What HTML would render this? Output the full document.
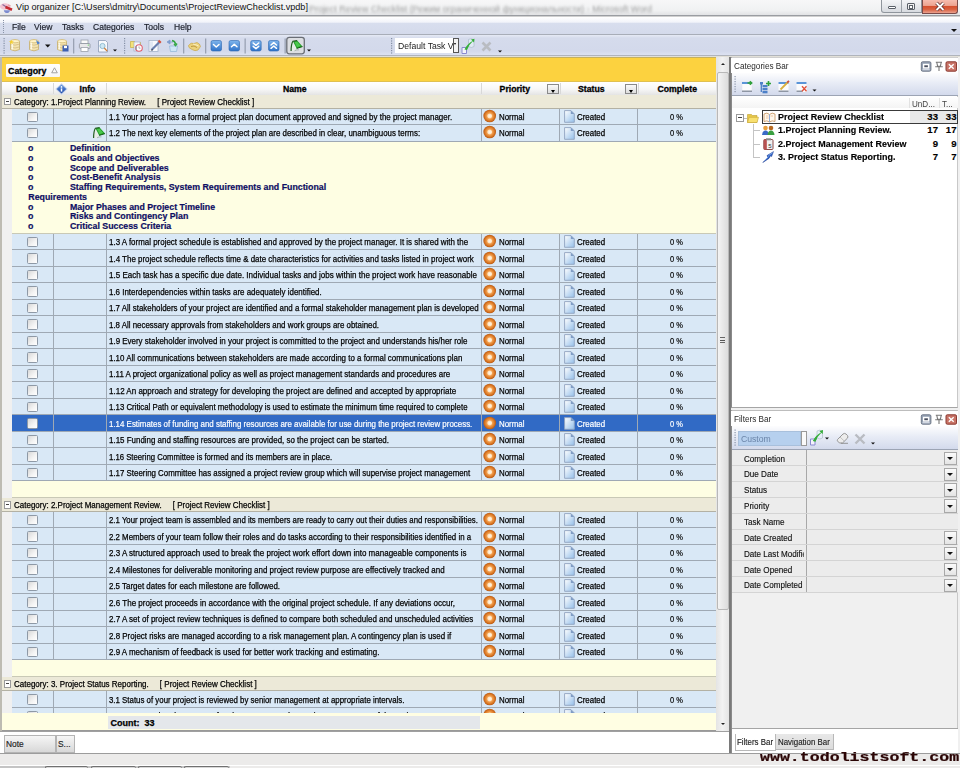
<!DOCTYPE html>
<html><head><meta charset="utf-8">
<style>
*{box-sizing:border-box;margin:0;padding:0}
html,body{width:960px;height:768px;overflow:hidden;background:#f0f0f0;font-family:"Liberation Sans",sans-serif;color:#000;position:relative}
.a{position:absolute}
svg{position:absolute;display:block}
#title{left:0;top:0;width:960px;height:16px;background:linear-gradient(#f7f7f8,#f0f1f2 70%,#e2e3e5);border-bottom:1px solid #9a9da2}
#title .tt{position:absolute;left:16px;top:2.2px;font-size:9.1px;color:#111;white-space:nowrap}
#title .blur{position:absolute;left:309px;top:2.5px;font-size:9.6px;color:#8c8c8c;white-space:nowrap;filter:blur(1.4px);opacity:.85;transform:scaleX(.93);transform-origin:0 0}
#menu{left:0;top:16px;width:960px;height:19px;background:linear-gradient(#ffffff,#f2f4fa 30%,#d8deee 38%,#d4daeb);border-top:1px solid #d0d0d0;border-bottom:1px solid #a8adb8}
#menu span{position:absolute;top:5px;font-size:9.3px;color:#1b1f2a;white-space:nowrap;transform:scaleX(.92);transform-origin:0 0;-webkit-text-stroke:.2px #1b1f2a}
#tb{left:0;top:35px;width:960px;height:22px;background:linear-gradient(#e6eaf5,#d5dbec 15%,#d3d9eb 80%,#dde2f1);border-bottom:2px solid #e2e0d8}
.grip{position:absolute;width:2px;border-left:1px dotted #8a94a8}
.sep{position:absolute;width:1px;background:#a8b0c0;border-right:1px solid #fff}
#grid{left:0;top:0;width:729px;height:731px;overflow:hidden}
#gl{left:0;top:57px;width:1.5px;height:674px;background:#bdbbb2}
#group{left:1.5px;top:57px;width:714.5px;height:25px;background:#fcd23f;border-top:1px solid #c4b060;border-bottom:1px solid #e0c050}
#catbtn{left:6px;top:64px;width:54px;height:12.5px;background:linear-gradient(#ffffff,#f6f6f6);border-radius:1px}
#catbtn span{position:absolute;left:2px;top:1.5px;font-size:8.9px;font-weight:bold;color:#000;-webkit-text-stroke:.3px #000}
#hdr{left:2px;top:82px;width:714px;height:13px;background:linear-gradient(#ffffff,#f7f7f7 55%,#e4e4e4)}
.hs{position:absolute;top:1px;width:1px;height:11px;background:#d8d8d8}
.hb{position:absolute;top:2px;font-size:8.7px;font-weight:bold;white-space:nowrap;color:#000;-webkit-text-stroke:.3px #000}
.dd{position:absolute;top:84px;width:12px;height:10px;border:1px solid #8a8a8a;background:linear-gradient(#fafafa,#dedede)}
.dd:after{content:"";position:absolute;left:3px;top:4.5px;border-left:2.5px solid transparent;border-right:2.5px solid transparent;border-top:3px solid #000}
#rows{left:0;top:57px;width:716px;height:656px;overflow:hidden}
.row{position:absolute;left:12px;width:704px;height:16.5px;background:#d9e8f6;border-bottom:1px solid #9fa9b4}
.row .c{position:absolute;top:0;height:100%;border-right:1px solid #9fa9b4;overflow:hidden;white-space:nowrap}
.row.sel{background:#316ac5;color:#fff}
.cb{position:absolute;left:15.4px;top:3.2px;width:10.5px;height:10.3px;border:1px solid #8e99a6;border-radius:1.5px;background:linear-gradient(135deg,#d8d8d8,#f4f4f4 60%,#ffffff)}
.nm span{position:absolute;left:2.4px;top:3.3px;font-size:9px;display:inline-block;transform:scaleX(.885);transform-origin:0 0;color:#000;-webkit-text-stroke:.25px #000}
.sel .nm span,.sel .c span,.sel .cp b{color:#fff;-webkit-text-stroke:.2px #fff}
.ip{left:1.3px;top:.3px}
.id{left:3.5px;top:1.5px}
.gr{left:38px;top:1px}
.t1,.t2{position:absolute;top:3.3px;font-size:9px;transform:scaleX(.88);transform-origin:0 0;color:#000;-webkit-text-stroke:.25px #000}
.t1{left:17px}.t2{left:17px}
.cp b{position:absolute;left:32.5px;top:3.3px;font-weight:normal;font-size:9px;color:#000;-webkit-text-stroke:.2px #000;transform:scaleX(.83);transform-origin:0 0}
.cat{position:absolute;left:2px;width:714px;background:#ece9d8;border-bottom:1px solid #b3b1a4}
.xb{position:absolute;left:1.5px;top:2.8px;width:7.5px;height:7.5px;border:1px solid #9a9a9a;background:#fff}
.xb:after{content:"";position:absolute;left:1px;top:2.2px;width:3.5px;height:1px;background:#444}
.ct,.cl{position:absolute;top:2.2px;font-size:9px;white-space:nowrap;transform:scaleX(.889);transform-origin:0 0;color:#000;-webkit-text-stroke:.25px #000}
.ct{left:12.2px}
.cl{left:153.8px}
.note{position:absolute;left:12px;width:704px;background:#fefee3;border-bottom:1px solid #c9c9b6}
.nb,.nt{position:absolute;font-size:8.8px;font-weight:bold;color:#0e0e62;white-space:nowrap;-webkit-text-stroke:.2px #0e0e62}
.nb{left:16px}
#foot{left:2px;top:713px;width:714px;height:18px;background:#fffee3;border-bottom:1px solid #999}
#count{left:108px;top:715.5px;width:372px;height:13.5px;background:#e4e7eb}
#count span{position:absolute;left:2.5px;top:2px;font-size:9px;font-weight:bold;color:#000;-webkit-text-stroke:.25px #000}
#sb{left:716px;top:57px;width:13px;height:674px;background:linear-gradient(90deg,#e4e4e4,#f2f2f2 50%,#e4e4e4)}
#thumb{left:717px;top:72px;width:11.5px;height:538px;border:1px solid #b8b8b8;border-radius:2px;background:linear-gradient(90deg,#f4f4f4,#dcdcdc)}
#split{left:729px;top:57px;width:2px;height:696px;background:#7a7a7a}
#right{left:731px;top:57px;width:229px;height:696px;background:#f0f0f0}
.ph{position:absolute;left:0;width:226px;height:15.5px;background:#fff}
.ph span{position:absolute;left:3px;top:3.5px;font-size:8.8px;color:#222;white-space:nowrap}
.ptb{position:absolute;left:0;width:226px;background:linear-gradient(#fafbfd,#d9dff0)}
#bottom{left:0;top:731px;width:729px;height:22px;background:#fff;border-top:1px solid #a0a0a0}
.ntab{position:absolute;top:2.5px;height:18px;border:1px solid #b4b4b4;background:linear-gradient(#f6f6f6,#d8d8d8);font-size:8.4px;color:#222;-webkit-text-stroke:.15px #222}
.ntab span{position:absolute;left:1px;top:3.5px;white-space:nowrap}
#status{left:0;top:753px;width:960px;height:15px;background:#ecebea;border-top:1px solid #9c9c9c}
#wm{left:760px;top:750.5px;font-family:"Liberation Mono",monospace;font-weight:bold;font-size:16.6px;line-height:16px;color:#2a0404;white-space:nowrap;letter-spacing:0;transform:scaleY(.8);transform-origin:0 0;-webkit-text-stroke:.3px #2a0404}

</style></head><body>
<div id="title" class="a">
 <svg style="left:0;top:0" width="14" height="15" viewBox="0 0 14 15"><ellipse cx="5" cy="6.5" rx="5" ry="3.2" fill="#f2c4d2"/><path d="M2.5 4.5 L6 6.8" stroke="#8a6a9a" stroke-width="1.2"/><path d="M5.5 7 L12 9.8" stroke="#c42a32" stroke-width="2.6"/><path d="M8 5 L10.5 6" stroke="#e8a0a8" stroke-width="1.5"/><path d="M3.8 10.2 H10 Q9.5 13 7 13 Q4.3 13 3.8 10.2Z" fill="#7d8cd0"/></svg>
 <span class="tt">Vip organizer [C:\Users\dmitry\Documents\ProjectReviewChecklist.vpdb]</span>
 <div class="blur">Project Review Checklist (Режим ограниченной функциональности) - Microsoft Word</div>
 <div class="a" style="left:881px;top:0;width:41px;height:13px;border:1px solid #8f959c;border-top:0;border-radius:0 0 0 3px;background:linear-gradient(#f4f5f7,#d8dbe0)"></div>
 <div class="a" style="left:901px;top:0;width:1px;height:12px;background:#9aa0a6"></div>
 <div class="a" style="left:888px;top:6px;width:8px;height:3px;border:1px solid #5a6068;border-radius:1px;background:#fff"></div>
 <div class="a" style="left:907px;top:2.5px;width:8px;height:7px;border:1px solid #5a6068;border-radius:1px;background:#f0f0f0"></div>
 <div class="a" style="left:909px;top:4.5px;width:4px;height:4px;border:1px solid #5a6068;background:#fff"></div>
 <div class="a" style="left:921.5px;top:0;width:36.5px;height:13.5px;border:1px solid #7a4a48;border-top:0;border-radius:0 0 3px 0;background:linear-gradient(#f6bcae,#eda491 42%,#d5502f 50%,#d9603f 72%,#eba18e)"></div>
 <svg style="left:933px;top:1px" width="14" height="11" viewBox="0 0 14 11"><path d="M3.5 2 L10.5 9 M10.5 2 L3.5 9" stroke="#5a2a28" stroke-width="3.4"/><path d="M3.5 2 L10.5 9 M10.5 2 L3.5 9" stroke="#fff" stroke-width="1.9"/></svg>
</div>
<div id="menu" class="a">
 <div class="grip" style="left:3px;top:3px;height:13px"></div>
 <span style="left:11.5px">File</span><span style="left:34px">View</span><span style="left:62px">Tasks</span><span style="left:92.5px">Categories</span><span style="left:143.5px">Tools</span><span style="left:174px">Help</span>
 <div class="a" style="left:950.5px;top:11.5px;border-left:3px solid transparent;border-right:3px solid transparent;border-top:3.5px solid #111"></div>
</div>
<div class="a" style="left:0;top:55px;width:960px;height:1px;background:#b0b4bc;z-index:2"></div>
<div id="tb" class="a">
<svg style="left:0;top:0" width="520" height="22" viewBox="0 0 520 22">
<g fill="#8590a6"><rect x="3.5" y="3.0" width="1.2" height="1.2"/><rect x="3.5" y="5.4" width="1.2" height="1.2"/><rect x="3.5" y="7.8" width="1.2" height="1.2"/><rect x="3.5" y="10.2" width="1.2" height="1.2"/><rect x="3.5" y="12.6" width="1.2" height="1.2"/><rect x="3.5" y="15.0" width="1.2" height="1.2"/><rect x="3.5" y="17.4" width="1.2" height="1.2"/></g>
<g transform="translate(10,4)">
<path d="M0.5 2.2 Q5 -0.6 9.5 2.2 V10.5 Q5 13.3 0.5 10.5Z" fill="#f3e3b0" stroke="#c4ac6a" stroke-width=".8"/>
<ellipse cx="5" cy="2.2" rx="4.5" ry="1.6" fill="#fff3c8" stroke="#c8ac62" stroke-width=".6"/>
<path d="M0.8 5.2 Q5 7.2 9.2 5.2 M0.8 8 Q5 10 9.2 8" fill="none" stroke="#cdb478" stroke-width=".7"/>
<path d="M2.3 3.5 V10.5" stroke="#fffdf2" stroke-width="1.6" opacity=".85"/>
<path d="M1 0.5 L2 2.2 L3.8 2.3 L2.5 3.5 L3 5.3 L1.4 4.3 L-.2 5.3 L.3 3.5 L-1 2.3 L.8 2.2Z" fill="#f6d030"/></g>
<g transform="translate(29,4)">
<path d="M0.5 2.2 Q5 -0.6 9.5 2.2 V10.5 Q5 13.3 0.5 10.5Z" fill="#f3e3b0" stroke="#c4ac6a" stroke-width=".8"/>
<ellipse cx="5" cy="2.2" rx="4.5" ry="1.6" fill="#fff3c8" stroke="#c8ac62" stroke-width=".6"/>
<path d="M0.8 5.2 Q5 7.2 9.2 5.2 M0.8 8 Q5 10 9.2 8" fill="none" stroke="#cdb478" stroke-width=".7"/>
<path d="M2.3 3.5 V10.5" stroke="#fffdf2" stroke-width="1.6" opacity=".85"/>
<path d="M7 1 L11 4 L8.5 5.5Z" fill="#4a7fd0"/></g>
<path d="M45 9.5 H50.5 L47.75 12.5Z" fill="#111"/>
<g transform="translate(57,4)">
<path d="M0.5 2.2 Q5 -0.6 9.5 2.2 V10.5 Q5 13.3 0.5 10.5Z" fill="#f3e3b0" stroke="#c4ac6a" stroke-width=".8"/>
<ellipse cx="5" cy="2.2" rx="4.5" ry="1.6" fill="#fff3c8" stroke="#c8ac62" stroke-width=".6"/>
<path d="M0.8 5.2 Q5 7.2 9.2 5.2 M0.8 8 Q5 10 9.2 8" fill="none" stroke="#cdb478" stroke-width=".7"/>
<path d="M2.3 3.5 V10.5" stroke="#fffdf2" stroke-width="1.6" opacity=".85"/>
<rect x="5.5" y="6.5" width="6" height="6" fill="#3d5fb0"/><rect x="7" y="7" width="3" height="2.2" fill="#fff"/></g>
<rect x="73" y="3.5" width="1.3" height="15" fill="#9aa2b3"/>
<g transform="translate(79,5)"><rect x="2" y="0" width="7" height="4" fill="#fafafa" stroke="#9aa0aa" stroke-width=".8"/><rect x="0.4" y="3.5" width="10.6" height="5" rx="1" fill="#e8e8ea" stroke="#8a909a" stroke-width=".8"/><rect x="2" y="7.5" width="7" height="4" fill="#fff" stroke="#9aa0aa" stroke-width=".8"/><circle cx="9.3" cy="5" r=".6" fill="#3c3"/></g>
<g transform="translate(98,5)"><path d="M.5 .5h7l2 2v9.5h-9z" fill="#f7f9fc" stroke="#8b9bb5" stroke-width=".8"/><circle cx="4.5" cy="6" r="2.6" fill="#cfe8f3" stroke="#7fb0c9" stroke-width=".8"/><path d="M6.3 8 L9.2 11.2" stroke="#d07a30" stroke-width="1.2"/></g>
<path d="M113 14.5 H117 L115 16.5Z" fill="#111"/>
<g fill="#8590a6"><rect x="124" y="3.0" width="1.2" height="1.2"/><rect x="124" y="5.4" width="1.2" height="1.2"/><rect x="124" y="7.8" width="1.2" height="1.2"/><rect x="124" y="10.2" width="1.2" height="1.2"/><rect x="124" y="12.6" width="1.2" height="1.2"/><rect x="124" y="15.0" width="1.2" height="1.2"/><rect x="124" y="17.4" width="1.2" height="1.2"/></g>
<g transform="translate(130,4)"><path d="M0.5 2.5h4l1 1h5v5h-10z" fill="#f3e27a" stroke="#c9b040" stroke-width=".7"/><rect x="4" y="3" width="6" height="9" fill="#f4f6fb" stroke="#9aa6bc" stroke-width=".6"/><circle cx="9" cy="9" r="3.3" fill="#fff" stroke="#e06070" stroke-width="1.1"/><path d="M9 7.3 V9.2 H10.5" stroke="#888" stroke-width=".6" fill="none"/><rect x="5.5" y="7" width="1.2" height="4" fill="#8a96aa"/></g>
<g transform="translate(148.5,4.5)"><rect x="0.5" y="1" width="9" height="11" fill="#f8f9fd" stroke="#a5b4ca" stroke-width=".8"/><rect x="1.5" y="2" width="3" height="9" fill="#e2e8f4"/><path d="M3 10.5 L11 2.5" stroke="#6a7fae" stroke-width="2.2"/><path d="M10 1 L12.3 3.3" stroke="#d8503a" stroke-width="2"/><path d="M2.5 11.3 L3.5 9.6 L4.6 10.6Z" fill="#333"/></g>
<g transform="translate(166,4)"><path d="M1 3 L4 1 L4 5Z M4 3 H7" fill="#7f9ccc" stroke="#7f9ccc" stroke-width=".8"/><path d="M3.5 7h8l-1 5.5h-6z" fill="#cfe6f6" stroke="#8fb4d6" stroke-width=".7"/><path d="M6 1.5 Q9 2 9.5 5 M8 5 L9.5 6.5 L11 4.5" stroke="#36a845" stroke-width="1.5" fill="none"/></g>
<rect x="183" y="3.5" width="1.3" height="15" fill="#9aa2b3"/>
<g transform="translate(188,6.5)"><path d="M0.5 4 Q3 0.5 6 2 L9 1 Q12 2 12.5 5 L10 8.5 Q7 10 4 8 L1 6Z" fill="#ecd27c" stroke="#c6a64a" stroke-width=".7"/><path d="M3 5 Q6 3.5 9 6" stroke="#b08a30" stroke-width=".8" fill="none"/><path d="M5 2.5 Q8 3 10.5 4.5" stroke="#fff6d0" stroke-width=".8" fill="none"/></g>
<rect x="205" y="3.5" width="1.3" height="15" fill="#9aa2b3"/>
<g transform="translate(210.5,5)"><rect x=".5" y=".5" width="10.5" height="10.5" rx="1.8" fill="url(#bl)" stroke="#2c67b0" stroke-width=".6"/><path d="M3 4.5 L5.75 7 L8.5 4.5" stroke="#fff" stroke-width="1.5" fill="none" stroke-linecap="round" stroke-linejoin="round"/></g><g transform="translate(228.5,5)"><rect x=".5" y=".5" width="10.5" height="10.5" rx="1.8" fill="url(#bl)" stroke="#2c67b0" stroke-width=".6"/><path d="M3 6.8 L5.75 4.3 L8.5 6.8" stroke="#fff" stroke-width="1.5" fill="none" stroke-linecap="round" stroke-linejoin="round"/></g><g transform="translate(250.2,5)"><rect x=".5" y=".5" width="10.5" height="10.5" rx="1.8" fill="url(#bl)" stroke="#2c67b0" stroke-width=".6"/><path d="M3 3 L5.75 5.3 L8.5 3 M3 6.3 L5.75 8.6 L8.5 6.3" stroke="#fff" stroke-width="1.5" fill="none" stroke-linecap="round" stroke-linejoin="round"/></g><g transform="translate(268,5)"><rect x=".5" y=".5" width="10.5" height="10.5" rx="1.8" fill="url(#bl)" stroke="#2c67b0" stroke-width=".6"/><path d="M3 5 L5.75 2.7 L8.5 5 M3 8.3 L5.75 6 L8.5 8.3" stroke="#fff" stroke-width="1.5" fill="none" stroke-linecap="round" stroke-linejoin="round"/></g>
<defs><linearGradient id="bl" x1="0" y1="0" x2="0" y2="1"><stop offset="0" stop-color="#7fb5ec"/><stop offset="1" stop-color="#2f73c9"/></linearGradient></defs>
<rect x="244.5" y="3.5" width="1.3" height="15" fill="#9aa2b3"/>
<rect x="284.5" y="3.5" width="1.3" height="15" fill="#9aa2b3"/>
<rect x="286.8" y="2.3" width="17.5" height="16.5" rx="2.5" fill="#dcdee2" stroke="#6a6e76" stroke-width="1.3"/>
<g transform="translate(289.5,4)"><path d="M1.8 12 Q2 6 3.5 2.8 L7 9.2 Q6 10.5 5 12.3Z" fill="#e6ede6"/><path d="M3.5 2.2 L7.6 1.6 L13 7.6 L7.2 9.4Z" fill="#1f9c24"/><path d="M4.8 2.8 L7.5 2.4 L11.3 7 L7.6 8.2Z" fill="#4cc94c"/><path d="M1.6 12 Q1.6 5 3.4 2.2 L7.6 1.6" stroke="#235c23" stroke-width="1.2" fill="none"/><path d="M7.2 9.4 L13 7.6" stroke="#145c14" stroke-width="1"/><path d="M5 11.8 Q7 10.6 9.5 10.8" stroke="#9aa6a0" stroke-width=".8" fill="none"/></g>
<path d="M307 14.5 H311 L309 16.5Z" fill="#111"/>
<g fill="#8590a6"><rect x="391" y="3.0" width="1.2" height="1.2"/><rect x="391" y="5.4" width="1.2" height="1.2"/><rect x="391" y="7.8" width="1.2" height="1.2"/><rect x="391" y="10.2" width="1.2" height="1.2"/><rect x="391" y="12.6" width="1.2" height="1.2"/><rect x="391" y="15.0" width="1.2" height="1.2"/><rect x="391" y="17.4" width="1.2" height="1.2"/></g>
</svg>
<div class="a" style="left:395px;top:3px;width:58.5px;height:15px;background:#fff;border:1px solid #fff"><span style="position:absolute;left:1.5px;top:2.3px;font-size:9.3px;color:#1a1a1a;white-space:nowrap;transform:scaleX(.93);transform-origin:0 0">Default Task V</span></div>
<div class="a" style="left:453px;top:3px;width:5.5px;height:15px;background:#f4f4f4;border:1px solid #555"></div>
<div class="a" style="left:454.3px;top:8px;border-left:1.5px solid transparent;border-right:1.5px solid transparent;border-top:2.5px solid #000"></div>
<svg style="left:460px;top:3px" width="50" height="18" viewBox="0 0 50 18">
<g transform="translate(-77.5,-3.5)"><path d="M79.5 13 H84 V19 H79.5Z" fill="#f4f4fa" stroke="#8a8ad0" stroke-width="1"/><path d="M86 5 Q89 3 91.5 5.5 V12 Q89 14 86 12Z" fill="#e4eef6" stroke="#9ab" stroke-width=".6" opacity=".8"/><path d="M82 15 Q85 9 90 6.5 L88.5 5 L92 4.2 L91.5 8 L90.3 6.8 Q86.5 10 84.5 15.5Z" fill="#36ae3a"/></g>
<path d="M22.5 4.5 L30.5 12.5 M30.5 4.5 L22.5 12.5" stroke="#b9bcc2" stroke-width="2.6"/>
<path d="M38 12.5 H42 L40 14.5Z" fill="#111"/>
</svg>

</div>
<div id="grid" class="a">
 <div id="group" class="a"></div>
 <div id="catbtn" class="a"><span>Category</span><svg style="left:44.5px;top:2.8px" width="7" height="7" viewBox="0 0 7 7"><path d="M3.5 .8 L6.3 5.8 H.7Z" fill="none" stroke="#9a9a9a" stroke-width=".9"/></svg></div>
 <div id="hdr" class="a">
  <span class="hb" style="left:14px">Done</span>
  <div class="hs" style="left:51px"></div>
  <svg style="left:53px;top:0.5px" width="13" height="12" viewBox="0 0 13 12"><defs><linearGradient id="dg" x1="0" y1="0" x2="0" y2="1"><stop offset="0" stop-color="#6a9ae0"/><stop offset="1" stop-color="#1c48a8"/></linearGradient></defs><path d="M6.5 .3 L12.7 6 L6.5 11.7 L.3 6Z" fill="#c4d2ea"/><path d="M6.5 1.6 L11.3 6 L6.5 10.4 L1.7 6Z" fill="url(#dg)"/><circle cx="6.5" cy="3.9" r=".85" fill="#fff"/><path d="M6.5 5.4v3.2" stroke="#fff" stroke-width="1.5"/></svg>
  <span class="hb" style="left:77.5px">Info</span>
  <div class="hs" style="left:104px"></div>
  <span class="hb" style="left:281px">Name</span>
  <div class="hs" style="left:479px"></div>
  <span class="hb" style="left:497.6px">Priority</span>
  <div class="hs" style="left:558px"></div>
  <span class="hb" style="left:576px">Status</span>
  <div class="hs" style="left:635.5px"></div>
  <span class="hb" style="left:655.5px">Complete</span>
 </div>
 <div class="dd" style="left:547px"></div>
 <div class="dd" style="left:624.5px"></div>
 <div id="rows" class="a"><div class="a" style="left:0;top:0;width:716px;height:656px">
<div class="cat" style="top:38px;height:14px"><div class="xb"></div><span class="ct">Category: 1.Project Planning Review.&nbsp;&nbsp;&nbsp;&nbsp;&nbsp;[ Project Review Checklist ]</span></div>
<div class="row" style="top:51.5px"><div class="c" style="left:0;width:41.5px"><div class="cb"></div></div><div class="c" style="left:41.5px;width:53.5px"></div><div class="c nm" style="left:95px;width:374.5px"><span style="transform:scaleX(0.8826)">1.1 Your project has a formal project plan document approved and signed by the project manager.</span></div><div class="c" style="left:469.5px;width:78.5px"><svg class="ip" width="14" height="14" viewBox="0 0 14 14"><defs><radialGradient id="po" cx=".5" cy=".5" r=".5"><stop offset="0" stop-color="#fff8ee"/><stop offset=".3" stop-color="#ffe4c0"/><stop offset=".45" stop-color="#f2a050"/><stop offset=".75" stop-color="#dc7a26"/><stop offset="1" stop-color="#b85812"/></radialGradient></defs><circle cx="6.7" cy="7" r="6.3" fill="url(#po)"/></svg><span class="t1">Normal</span></div><div class="c" style="left:548px;width:77.5px"><svg class="id" width="11" height="13" viewBox="0 0 11 13"><defs><linearGradient id="gd" x1="0" y1="0" x2="1" y2="1"><stop offset="0" stop-color="#ffffff"/><stop offset="1" stop-color="#94bfea"/></linearGradient></defs><path d="M.6 .6h6.4l3.3 3.3v8.4H.6z" fill="url(#gd)" stroke="#8ea2c0" stroke-width=".9"/><path d="M6.8 .6v3.5h3.5z" fill="#7f9cc4"/></svg><span class="t2">Created</span></div><div class="c cp" style="left:625.5px;width:78.5px;border-right:0"><b>0 %</b></div></div>
<div class="row" style="top:68.0px"><div class="c" style="left:0;width:41.5px"><div class="cb"></div></div><div class="c" style="left:41.5px;width:53.5px"><svg class="gr" width="14" height="13" viewBox="0 0 14 13"><path d="M1.8 12 Q2 6 3.5 2.8 L7 9.2 Q6 10.5 5 12.3Z" fill="#e6ede6"/><path d="M3.5 2.2 L7.6 1.6 L13 7.6 L7.2 9.4Z" fill="#1f9c24"/><path d="M4.8 2.8 L7.5 2.4 L11.3 7 L7.6 8.2Z" fill="#4cc94c"/><path d="M1.6 12 Q1.6 5 3.4 2.2 L7.6 1.6" stroke="#235c23" stroke-width="1.2" fill="none"/><path d="M7.2 9.4 L13 7.6" stroke="#145c14" stroke-width="1"/><path d="M5 11.8 Q7 10.6 9.5 10.8" stroke="#9aa6a0" stroke-width=".8" fill="none"/></svg></div><div class="c nm" style="left:95px;width:374.5px"><span style="transform:scaleX(0.8787)">1.2 The next key elements of the project plan are described in clear, unambiguous terms:</span></div><div class="c" style="left:469.5px;width:78.5px"><svg class="ip" width="14" height="14" viewBox="0 0 14 14"><defs><radialGradient id="po" cx=".5" cy=".5" r=".5"><stop offset="0" stop-color="#fff8ee"/><stop offset=".3" stop-color="#ffe4c0"/><stop offset=".45" stop-color="#f2a050"/><stop offset=".75" stop-color="#dc7a26"/><stop offset="1" stop-color="#b85812"/></radialGradient></defs><circle cx="6.7" cy="7" r="6.3" fill="url(#po)"/></svg><span class="t1">Normal</span></div><div class="c" style="left:548px;width:77.5px"><svg class="id" width="11" height="13" viewBox="0 0 11 13"><defs><linearGradient id="gd" x1="0" y1="0" x2="1" y2="1"><stop offset="0" stop-color="#ffffff"/><stop offset="1" stop-color="#94bfea"/></linearGradient></defs><path d="M.6 .6h6.4l3.3 3.3v8.4H.6z" fill="url(#gd)" stroke="#8ea2c0" stroke-width=".9"/><path d="M6.8 .6v3.5h3.5z" fill="#7f9cc4"/></svg><span class="t2">Created</span></div><div class="c cp" style="left:625.5px;width:78.5px;border-right:0"><b>0 %</b></div></div>
<div class="note" style="top:85px;height:91.8px"><div class="nb" style="top:1.2px">o</div><div class="nt" style="top:1.2px;left:58px">Definition</div><div class="nb" style="top:10.95px">o</div><div class="nt" style="top:10.95px;left:58px">Goals and Objectives</div><div class="nb" style="top:20.7px">o</div><div class="nt" style="top:20.7px;left:58px">Scope and Deliverables</div><div class="nb" style="top:30.45px">o</div><div class="nt" style="top:30.45px;left:58px">Cost-Benefit Analysis</div><div class="nb" style="top:40.2px">o</div><div class="nt" style="top:40.2px;left:58px">Staffing Requirements, System Requirements and Functional</div><div class="nt" style="top:49.95px;left:16.3px">Requirements</div><div class="nb" style="top:59.7px">o</div><div class="nt" style="top:59.7px;left:58px">Major Phases and Project Timeline</div><div class="nb" style="top:69.45px">o</div><div class="nt" style="top:69.45px;left:58px">Risks and Contingency Plan</div><div class="nb" style="top:79.2px">o</div><div class="nt" style="top:79.2px;left:58px">Critical Success Criteria</div></div>
<div class="row" style="top:176.8px"><div class="c" style="left:0;width:41.5px"><div class="cb"></div></div><div class="c" style="left:41.5px;width:53.5px"></div><div class="c nm" style="left:95px;width:374.5px"><span style="transform:scaleX(0.883)">1.3 A formal project schedule is established and approved by the project manager. It is shared with the</span></div><div class="c" style="left:469.5px;width:78.5px"><svg class="ip" width="14" height="14" viewBox="0 0 14 14"><defs><radialGradient id="po" cx=".5" cy=".5" r=".5"><stop offset="0" stop-color="#fff8ee"/><stop offset=".3" stop-color="#ffe4c0"/><stop offset=".45" stop-color="#f2a050"/><stop offset=".75" stop-color="#dc7a26"/><stop offset="1" stop-color="#b85812"/></radialGradient></defs><circle cx="6.7" cy="7" r="6.3" fill="url(#po)"/></svg><span class="t1">Normal</span></div><div class="c" style="left:548px;width:77.5px"><svg class="id" width="11" height="13" viewBox="0 0 11 13"><defs><linearGradient id="gd" x1="0" y1="0" x2="1" y2="1"><stop offset="0" stop-color="#ffffff"/><stop offset="1" stop-color="#94bfea"/></linearGradient></defs><path d="M.6 .6h6.4l3.3 3.3v8.4H.6z" fill="url(#gd)" stroke="#8ea2c0" stroke-width=".9"/><path d="M6.8 .6v3.5h3.5z" fill="#7f9cc4"/></svg><span class="t2">Created</span></div><div class="c cp" style="left:625.5px;width:78.5px;border-right:0"><b>0 %</b></div></div>
<div class="row" style="top:193.3px"><div class="c" style="left:0;width:41.5px"><div class="cb"></div></div><div class="c" style="left:41.5px;width:53.5px"></div><div class="c nm" style="left:95px;width:374.5px"><span style="transform:scaleX(0.8833)">1.4 The project schedule reflects time &amp; date characteristics for activities and tasks listed in project work</span></div><div class="c" style="left:469.5px;width:78.5px"><svg class="ip" width="14" height="14" viewBox="0 0 14 14"><defs><radialGradient id="po" cx=".5" cy=".5" r=".5"><stop offset="0" stop-color="#fff8ee"/><stop offset=".3" stop-color="#ffe4c0"/><stop offset=".45" stop-color="#f2a050"/><stop offset=".75" stop-color="#dc7a26"/><stop offset="1" stop-color="#b85812"/></radialGradient></defs><circle cx="6.7" cy="7" r="6.3" fill="url(#po)"/></svg><span class="t1">Normal</span></div><div class="c" style="left:548px;width:77.5px"><svg class="id" width="11" height="13" viewBox="0 0 11 13"><defs><linearGradient id="gd" x1="0" y1="0" x2="1" y2="1"><stop offset="0" stop-color="#ffffff"/><stop offset="1" stop-color="#94bfea"/></linearGradient></defs><path d="M.6 .6h6.4l3.3 3.3v8.4H.6z" fill="url(#gd)" stroke="#8ea2c0" stroke-width=".9"/><path d="M6.8 .6v3.5h3.5z" fill="#7f9cc4"/></svg><span class="t2">Created</span></div><div class="c cp" style="left:625.5px;width:78.5px;border-right:0"><b>0 %</b></div></div>
<div class="row" style="top:209.8px"><div class="c" style="left:0;width:41.5px"><div class="cb"></div></div><div class="c" style="left:41.5px;width:53.5px"></div><div class="c nm" style="left:95px;width:374.5px"><span style="transform:scaleX(0.8913)">1.5 Each task has a specific due date. Individual tasks and jobs within the project work have reasonable</span></div><div class="c" style="left:469.5px;width:78.5px"><svg class="ip" width="14" height="14" viewBox="0 0 14 14"><defs><radialGradient id="po" cx=".5" cy=".5" r=".5"><stop offset="0" stop-color="#fff8ee"/><stop offset=".3" stop-color="#ffe4c0"/><stop offset=".45" stop-color="#f2a050"/><stop offset=".75" stop-color="#dc7a26"/><stop offset="1" stop-color="#b85812"/></radialGradient></defs><circle cx="6.7" cy="7" r="6.3" fill="url(#po)"/></svg><span class="t1">Normal</span></div><div class="c" style="left:548px;width:77.5px"><svg class="id" width="11" height="13" viewBox="0 0 11 13"><defs><linearGradient id="gd" x1="0" y1="0" x2="1" y2="1"><stop offset="0" stop-color="#ffffff"/><stop offset="1" stop-color="#94bfea"/></linearGradient></defs><path d="M.6 .6h6.4l3.3 3.3v8.4H.6z" fill="url(#gd)" stroke="#8ea2c0" stroke-width=".9"/><path d="M6.8 .6v3.5h3.5z" fill="#7f9cc4"/></svg><span class="t2">Created</span></div><div class="c cp" style="left:625.5px;width:78.5px;border-right:0"><b>0 %</b></div></div>
<div class="row" style="top:226.3px"><div class="c" style="left:0;width:41.5px"><div class="cb"></div></div><div class="c" style="left:41.5px;width:53.5px"></div><div class="c nm" style="left:95px;width:374.5px"><span style="transform:scaleX(0.8819)">1.6 Interdependencies within tasks are adequately identified.</span></div><div class="c" style="left:469.5px;width:78.5px"><svg class="ip" width="14" height="14" viewBox="0 0 14 14"><defs><radialGradient id="po" cx=".5" cy=".5" r=".5"><stop offset="0" stop-color="#fff8ee"/><stop offset=".3" stop-color="#ffe4c0"/><stop offset=".45" stop-color="#f2a050"/><stop offset=".75" stop-color="#dc7a26"/><stop offset="1" stop-color="#b85812"/></radialGradient></defs><circle cx="6.7" cy="7" r="6.3" fill="url(#po)"/></svg><span class="t1">Normal</span></div><div class="c" style="left:548px;width:77.5px"><svg class="id" width="11" height="13" viewBox="0 0 11 13"><defs><linearGradient id="gd" x1="0" y1="0" x2="1" y2="1"><stop offset="0" stop-color="#ffffff"/><stop offset="1" stop-color="#94bfea"/></linearGradient></defs><path d="M.6 .6h6.4l3.3 3.3v8.4H.6z" fill="url(#gd)" stroke="#8ea2c0" stroke-width=".9"/><path d="M6.8 .6v3.5h3.5z" fill="#7f9cc4"/></svg><span class="t2">Created</span></div><div class="c cp" style="left:625.5px;width:78.5px;border-right:0"><b>0 %</b></div></div>
<div class="row" style="top:242.8px"><div class="c" style="left:0;width:41.5px"><div class="cb"></div></div><div class="c" style="left:41.5px;width:53.5px"></div><div class="c nm" style="left:95px;width:374.5px"><span style="transform:scaleX(0.8784)">1.7 All stakeholders of your project are identified and a formal stakeholder management plan is developed</span></div><div class="c" style="left:469.5px;width:78.5px"><svg class="ip" width="14" height="14" viewBox="0 0 14 14"><defs><radialGradient id="po" cx=".5" cy=".5" r=".5"><stop offset="0" stop-color="#fff8ee"/><stop offset=".3" stop-color="#ffe4c0"/><stop offset=".45" stop-color="#f2a050"/><stop offset=".75" stop-color="#dc7a26"/><stop offset="1" stop-color="#b85812"/></radialGradient></defs><circle cx="6.7" cy="7" r="6.3" fill="url(#po)"/></svg><span class="t1">Normal</span></div><div class="c" style="left:548px;width:77.5px"><svg class="id" width="11" height="13" viewBox="0 0 11 13"><defs><linearGradient id="gd" x1="0" y1="0" x2="1" y2="1"><stop offset="0" stop-color="#ffffff"/><stop offset="1" stop-color="#94bfea"/></linearGradient></defs><path d="M.6 .6h6.4l3.3 3.3v8.4H.6z" fill="url(#gd)" stroke="#8ea2c0" stroke-width=".9"/><path d="M6.8 .6v3.5h3.5z" fill="#7f9cc4"/></svg><span class="t2">Created</span></div><div class="c cp" style="left:625.5px;width:78.5px;border-right:0"><b>0 %</b></div></div>
<div class="row" style="top:259.3px"><div class="c" style="left:0;width:41.5px"><div class="cb"></div></div><div class="c" style="left:41.5px;width:53.5px"></div><div class="c nm" style="left:95px;width:374.5px"><span style="transform:scaleX(0.8776)">1.8 All necessary approvals from stakeholders and work groups are obtained.</span></div><div class="c" style="left:469.5px;width:78.5px"><svg class="ip" width="14" height="14" viewBox="0 0 14 14"><defs><radialGradient id="po" cx=".5" cy=".5" r=".5"><stop offset="0" stop-color="#fff8ee"/><stop offset=".3" stop-color="#ffe4c0"/><stop offset=".45" stop-color="#f2a050"/><stop offset=".75" stop-color="#dc7a26"/><stop offset="1" stop-color="#b85812"/></radialGradient></defs><circle cx="6.7" cy="7" r="6.3" fill="url(#po)"/></svg><span class="t1">Normal</span></div><div class="c" style="left:548px;width:77.5px"><svg class="id" width="11" height="13" viewBox="0 0 11 13"><defs><linearGradient id="gd" x1="0" y1="0" x2="1" y2="1"><stop offset="0" stop-color="#ffffff"/><stop offset="1" stop-color="#94bfea"/></linearGradient></defs><path d="M.6 .6h6.4l3.3 3.3v8.4H.6z" fill="url(#gd)" stroke="#8ea2c0" stroke-width=".9"/><path d="M6.8 .6v3.5h3.5z" fill="#7f9cc4"/></svg><span class="t2">Created</span></div><div class="c cp" style="left:625.5px;width:78.5px;border-right:0"><b>0 %</b></div></div>
<div class="row" style="top:275.8px"><div class="c" style="left:0;width:41.5px"><div class="cb"></div></div><div class="c" style="left:41.5px;width:53.5px"></div><div class="c nm" style="left:95px;width:374.5px"><span style="transform:scaleX(0.8836)">1.9 Every stakeholder involved in your project is committed to the project and understands his/her role</span></div><div class="c" style="left:469.5px;width:78.5px"><svg class="ip" width="14" height="14" viewBox="0 0 14 14"><defs><radialGradient id="po" cx=".5" cy=".5" r=".5"><stop offset="0" stop-color="#fff8ee"/><stop offset=".3" stop-color="#ffe4c0"/><stop offset=".45" stop-color="#f2a050"/><stop offset=".75" stop-color="#dc7a26"/><stop offset="1" stop-color="#b85812"/></radialGradient></defs><circle cx="6.7" cy="7" r="6.3" fill="url(#po)"/></svg><span class="t1">Normal</span></div><div class="c" style="left:548px;width:77.5px"><svg class="id" width="11" height="13" viewBox="0 0 11 13"><defs><linearGradient id="gd" x1="0" y1="0" x2="1" y2="1"><stop offset="0" stop-color="#ffffff"/><stop offset="1" stop-color="#94bfea"/></linearGradient></defs><path d="M.6 .6h6.4l3.3 3.3v8.4H.6z" fill="url(#gd)" stroke="#8ea2c0" stroke-width=".9"/><path d="M6.8 .6v3.5h3.5z" fill="#7f9cc4"/></svg><span class="t2">Created</span></div><div class="c cp" style="left:625.5px;width:78.5px;border-right:0"><b>0 %</b></div></div>
<div class="row" style="top:292.3px"><div class="c" style="left:0;width:41.5px"><div class="cb"></div></div><div class="c" style="left:41.5px;width:53.5px"></div><div class="c nm" style="left:95px;width:374.5px"><span style="transform:scaleX(0.8806)">1.10 All communications between stakeholders are made according to a formal communications plan</span></div><div class="c" style="left:469.5px;width:78.5px"><svg class="ip" width="14" height="14" viewBox="0 0 14 14"><defs><radialGradient id="po" cx=".5" cy=".5" r=".5"><stop offset="0" stop-color="#fff8ee"/><stop offset=".3" stop-color="#ffe4c0"/><stop offset=".45" stop-color="#f2a050"/><stop offset=".75" stop-color="#dc7a26"/><stop offset="1" stop-color="#b85812"/></radialGradient></defs><circle cx="6.7" cy="7" r="6.3" fill="url(#po)"/></svg><span class="t1">Normal</span></div><div class="c" style="left:548px;width:77.5px"><svg class="id" width="11" height="13" viewBox="0 0 11 13"><defs><linearGradient id="gd" x1="0" y1="0" x2="1" y2="1"><stop offset="0" stop-color="#ffffff"/><stop offset="1" stop-color="#94bfea"/></linearGradient></defs><path d="M.6 .6h6.4l3.3 3.3v8.4H.6z" fill="url(#gd)" stroke="#8ea2c0" stroke-width=".9"/><path d="M6.8 .6v3.5h3.5z" fill="#7f9cc4"/></svg><span class="t2">Created</span></div><div class="c cp" style="left:625.5px;width:78.5px;border-right:0"><b>0 %</b></div></div>
<div class="row" style="top:308.8px"><div class="c" style="left:0;width:41.5px"><div class="cb"></div></div><div class="c" style="left:41.5px;width:53.5px"></div><div class="c nm" style="left:95px;width:374.5px"><span style="transform:scaleX(0.8815)">1.11 A project organizational policy as well as project management standards and procedures are</span></div><div class="c" style="left:469.5px;width:78.5px"><svg class="ip" width="14" height="14" viewBox="0 0 14 14"><defs><radialGradient id="po" cx=".5" cy=".5" r=".5"><stop offset="0" stop-color="#fff8ee"/><stop offset=".3" stop-color="#ffe4c0"/><stop offset=".45" stop-color="#f2a050"/><stop offset=".75" stop-color="#dc7a26"/><stop offset="1" stop-color="#b85812"/></radialGradient></defs><circle cx="6.7" cy="7" r="6.3" fill="url(#po)"/></svg><span class="t1">Normal</span></div><div class="c" style="left:548px;width:77.5px"><svg class="id" width="11" height="13" viewBox="0 0 11 13"><defs><linearGradient id="gd" x1="0" y1="0" x2="1" y2="1"><stop offset="0" stop-color="#ffffff"/><stop offset="1" stop-color="#94bfea"/></linearGradient></defs><path d="M.6 .6h6.4l3.3 3.3v8.4H.6z" fill="url(#gd)" stroke="#8ea2c0" stroke-width=".9"/><path d="M6.8 .6v3.5h3.5z" fill="#7f9cc4"/></svg><span class="t2">Created</span></div><div class="c cp" style="left:625.5px;width:78.5px;border-right:0"><b>0 %</b></div></div>
<div class="row" style="top:325.3px"><div class="c" style="left:0;width:41.5px"><div class="cb"></div></div><div class="c" style="left:41.5px;width:53.5px"></div><div class="c nm" style="left:95px;width:374.5px"><span style="transform:scaleX(0.8894)">1.12 An approach and strategy for developing the project are defined and accepted by appropriate</span></div><div class="c" style="left:469.5px;width:78.5px"><svg class="ip" width="14" height="14" viewBox="0 0 14 14"><defs><radialGradient id="po" cx=".5" cy=".5" r=".5"><stop offset="0" stop-color="#fff8ee"/><stop offset=".3" stop-color="#ffe4c0"/><stop offset=".45" stop-color="#f2a050"/><stop offset=".75" stop-color="#dc7a26"/><stop offset="1" stop-color="#b85812"/></radialGradient></defs><circle cx="6.7" cy="7" r="6.3" fill="url(#po)"/></svg><span class="t1">Normal</span></div><div class="c" style="left:548px;width:77.5px"><svg class="id" width="11" height="13" viewBox="0 0 11 13"><defs><linearGradient id="gd" x1="0" y1="0" x2="1" y2="1"><stop offset="0" stop-color="#ffffff"/><stop offset="1" stop-color="#94bfea"/></linearGradient></defs><path d="M.6 .6h6.4l3.3 3.3v8.4H.6z" fill="url(#gd)" stroke="#8ea2c0" stroke-width=".9"/><path d="M6.8 .6v3.5h3.5z" fill="#7f9cc4"/></svg><span class="t2">Created</span></div><div class="c cp" style="left:625.5px;width:78.5px;border-right:0"><b>0 %</b></div></div>
<div class="row" style="top:341.8px"><div class="c" style="left:0;width:41.5px"><div class="cb"></div></div><div class="c" style="left:41.5px;width:53.5px"></div><div class="c nm" style="left:95px;width:374.5px"><span style="transform:scaleX(0.8697)">1.13 Critical Path or equivalent methodology is used to estimate the minimum time required to complete</span></div><div class="c" style="left:469.5px;width:78.5px"><svg class="ip" width="14" height="14" viewBox="0 0 14 14"><defs><radialGradient id="po" cx=".5" cy=".5" r=".5"><stop offset="0" stop-color="#fff8ee"/><stop offset=".3" stop-color="#ffe4c0"/><stop offset=".45" stop-color="#f2a050"/><stop offset=".75" stop-color="#dc7a26"/><stop offset="1" stop-color="#b85812"/></radialGradient></defs><circle cx="6.7" cy="7" r="6.3" fill="url(#po)"/></svg><span class="t1">Normal</span></div><div class="c" style="left:548px;width:77.5px"><svg class="id" width="11" height="13" viewBox="0 0 11 13"><defs><linearGradient id="gd" x1="0" y1="0" x2="1" y2="1"><stop offset="0" stop-color="#ffffff"/><stop offset="1" stop-color="#94bfea"/></linearGradient></defs><path d="M.6 .6h6.4l3.3 3.3v8.4H.6z" fill="url(#gd)" stroke="#8ea2c0" stroke-width=".9"/><path d="M6.8 .6v3.5h3.5z" fill="#7f9cc4"/></svg><span class="t2">Created</span></div><div class="c cp" style="left:625.5px;width:78.5px;border-right:0"><b>0 %</b></div></div>
<div class="row sel" style="top:358.3px"><div class="c" style="left:0;width:41.5px"><div class="cb"></div></div><div class="c" style="left:41.5px;width:53.5px"></div><div class="c nm" style="left:95px;width:374.5px"><span style="transform:scaleX(0.8795)">1.14 Estimates of funding and staffing resources are available for use during the project review process.</span></div><div class="c" style="left:469.5px;width:78.5px"><svg class="ip" width="14" height="14" viewBox="0 0 14 14"><defs><radialGradient id="po" cx=".5" cy=".5" r=".5"><stop offset="0" stop-color="#fff8ee"/><stop offset=".3" stop-color="#ffe4c0"/><stop offset=".45" stop-color="#f2a050"/><stop offset=".75" stop-color="#dc7a26"/><stop offset="1" stop-color="#b85812"/></radialGradient></defs><circle cx="6.7" cy="7" r="6.3" fill="url(#po)"/></svg><span class="t1">Normal</span></div><div class="c" style="left:548px;width:77.5px"><svg class="id" width="11" height="13" viewBox="0 0 11 13"><defs><linearGradient id="gd" x1="0" y1="0" x2="1" y2="1"><stop offset="0" stop-color="#ffffff"/><stop offset="1" stop-color="#94bfea"/></linearGradient></defs><path d="M.6 .6h6.4l3.3 3.3v8.4H.6z" fill="url(#gd)" stroke="#8ea2c0" stroke-width=".9"/><path d="M6.8 .6v3.5h3.5z" fill="#7f9cc4"/></svg><span class="t2">Created</span></div><div class="c cp" style="left:625.5px;width:78.5px;border-right:0"><b>0 %</b></div></div>
<div class="row" style="top:374.8px"><div class="c" style="left:0;width:41.5px"><div class="cb"></div></div><div class="c" style="left:41.5px;width:53.5px"></div><div class="c nm" style="left:95px;width:374.5px"><span style="transform:scaleX(0.8832)">1.15 Funding and staffing resources are provided, so the project can be started.</span></div><div class="c" style="left:469.5px;width:78.5px"><svg class="ip" width="14" height="14" viewBox="0 0 14 14"><defs><radialGradient id="po" cx=".5" cy=".5" r=".5"><stop offset="0" stop-color="#fff8ee"/><stop offset=".3" stop-color="#ffe4c0"/><stop offset=".45" stop-color="#f2a050"/><stop offset=".75" stop-color="#dc7a26"/><stop offset="1" stop-color="#b85812"/></radialGradient></defs><circle cx="6.7" cy="7" r="6.3" fill="url(#po)"/></svg><span class="t1">Normal</span></div><div class="c" style="left:548px;width:77.5px"><svg class="id" width="11" height="13" viewBox="0 0 11 13"><defs><linearGradient id="gd" x1="0" y1="0" x2="1" y2="1"><stop offset="0" stop-color="#ffffff"/><stop offset="1" stop-color="#94bfea"/></linearGradient></defs><path d="M.6 .6h6.4l3.3 3.3v8.4H.6z" fill="url(#gd)" stroke="#8ea2c0" stroke-width=".9"/><path d="M6.8 .6v3.5h3.5z" fill="#7f9cc4"/></svg><span class="t2">Created</span></div><div class="c cp" style="left:625.5px;width:78.5px;border-right:0"><b>0 %</b></div></div>
<div class="row" style="top:391.3px"><div class="c" style="left:0;width:41.5px"><div class="cb"></div></div><div class="c" style="left:41.5px;width:53.5px"></div><div class="c nm" style="left:95px;width:374.5px"><span style="transform:scaleX(0.8593)">1.16 Steering Committee is formed and its members are in place.</span></div><div class="c" style="left:469.5px;width:78.5px"><svg class="ip" width="14" height="14" viewBox="0 0 14 14"><defs><radialGradient id="po" cx=".5" cy=".5" r=".5"><stop offset="0" stop-color="#fff8ee"/><stop offset=".3" stop-color="#ffe4c0"/><stop offset=".45" stop-color="#f2a050"/><stop offset=".75" stop-color="#dc7a26"/><stop offset="1" stop-color="#b85812"/></radialGradient></defs><circle cx="6.7" cy="7" r="6.3" fill="url(#po)"/></svg><span class="t1">Normal</span></div><div class="c" style="left:548px;width:77.5px"><svg class="id" width="11" height="13" viewBox="0 0 11 13"><defs><linearGradient id="gd" x1="0" y1="0" x2="1" y2="1"><stop offset="0" stop-color="#ffffff"/><stop offset="1" stop-color="#94bfea"/></linearGradient></defs><path d="M.6 .6h6.4l3.3 3.3v8.4H.6z" fill="url(#gd)" stroke="#8ea2c0" stroke-width=".9"/><path d="M6.8 .6v3.5h3.5z" fill="#7f9cc4"/></svg><span class="t2">Created</span></div><div class="c cp" style="left:625.5px;width:78.5px;border-right:0"><b>0 %</b></div></div>
<div class="row" style="top:407.8px"><div class="c" style="left:0;width:41.5px"><div class="cb"></div></div><div class="c" style="left:41.5px;width:53.5px"></div><div class="c nm" style="left:95px;width:374.5px"><span style="transform:scaleX(0.8762)">1.17 Steering Committee has assigned a project review group which will supervise project management</span></div><div class="c" style="left:469.5px;width:78.5px"><svg class="ip" width="14" height="14" viewBox="0 0 14 14"><defs><radialGradient id="po" cx=".5" cy=".5" r=".5"><stop offset="0" stop-color="#fff8ee"/><stop offset=".3" stop-color="#ffe4c0"/><stop offset=".45" stop-color="#f2a050"/><stop offset=".75" stop-color="#dc7a26"/><stop offset="1" stop-color="#b85812"/></radialGradient></defs><circle cx="6.7" cy="7" r="6.3" fill="url(#po)"/></svg><span class="t1">Normal</span></div><div class="c" style="left:548px;width:77.5px"><svg class="id" width="11" height="13" viewBox="0 0 11 13"><defs><linearGradient id="gd" x1="0" y1="0" x2="1" y2="1"><stop offset="0" stop-color="#ffffff"/><stop offset="1" stop-color="#94bfea"/></linearGradient></defs><path d="M.6 .6h6.4l3.3 3.3v8.4H.6z" fill="url(#gd)" stroke="#8ea2c0" stroke-width=".9"/><path d="M6.8 .6v3.5h3.5z" fill="#7f9cc4"/></svg><span class="t2">Created</span></div><div class="c cp" style="left:625.5px;width:78.5px;border-right:0"><b>0 %</b></div></div>
<div class="note" style="top:424.3px;height:17px"></div>
<div class="cat" style="top:441.3px;height:13.5px"><div class="xb"></div><span class="ct">Category: 2.Project Management Review.&nbsp;&nbsp;&nbsp;&nbsp;&nbsp;[ Project Review Checklist ]</span></div>
<div class="row" style="top:454.8px"><div class="c" style="left:0;width:41.5px"><div class="cb"></div></div><div class="c" style="left:41.5px;width:53.5px"></div><div class="c nm" style="left:95px;width:374.5px"><span style="transform:scaleX(0.8676)">2.1 Your project team is assembled and its members are ready to carry out their duties and responsibilities.</span></div><div class="c" style="left:469.5px;width:78.5px"><svg class="ip" width="14" height="14" viewBox="0 0 14 14"><defs><radialGradient id="po" cx=".5" cy=".5" r=".5"><stop offset="0" stop-color="#fff8ee"/><stop offset=".3" stop-color="#ffe4c0"/><stop offset=".45" stop-color="#f2a050"/><stop offset=".75" stop-color="#dc7a26"/><stop offset="1" stop-color="#b85812"/></radialGradient></defs><circle cx="6.7" cy="7" r="6.3" fill="url(#po)"/></svg><span class="t1">Normal</span></div><div class="c" style="left:548px;width:77.5px"><svg class="id" width="11" height="13" viewBox="0 0 11 13"><defs><linearGradient id="gd" x1="0" y1="0" x2="1" y2="1"><stop offset="0" stop-color="#ffffff"/><stop offset="1" stop-color="#94bfea"/></linearGradient></defs><path d="M.6 .6h6.4l3.3 3.3v8.4H.6z" fill="url(#gd)" stroke="#8ea2c0" stroke-width=".9"/><path d="M6.8 .6v3.5h3.5z" fill="#7f9cc4"/></svg><span class="t2">Created</span></div><div class="c cp" style="left:625.5px;width:78.5px;border-right:0"><b>0 %</b></div></div>
<div class="row" style="top:471.3px"><div class="c" style="left:0;width:41.5px"><div class="cb"></div></div><div class="c" style="left:41.5px;width:53.5px"></div><div class="c nm" style="left:95px;width:374.5px"><span style="transform:scaleX(0.8731)">2.2 Members of your team follow their roles and do tasks according to their responsibilities identified in a</span></div><div class="c" style="left:469.5px;width:78.5px"><svg class="ip" width="14" height="14" viewBox="0 0 14 14"><defs><radialGradient id="po" cx=".5" cy=".5" r=".5"><stop offset="0" stop-color="#fff8ee"/><stop offset=".3" stop-color="#ffe4c0"/><stop offset=".45" stop-color="#f2a050"/><stop offset=".75" stop-color="#dc7a26"/><stop offset="1" stop-color="#b85812"/></radialGradient></defs><circle cx="6.7" cy="7" r="6.3" fill="url(#po)"/></svg><span class="t1">Normal</span></div><div class="c" style="left:548px;width:77.5px"><svg class="id" width="11" height="13" viewBox="0 0 11 13"><defs><linearGradient id="gd" x1="0" y1="0" x2="1" y2="1"><stop offset="0" stop-color="#ffffff"/><stop offset="1" stop-color="#94bfea"/></linearGradient></defs><path d="M.6 .6h6.4l3.3 3.3v8.4H.6z" fill="url(#gd)" stroke="#8ea2c0" stroke-width=".9"/><path d="M6.8 .6v3.5h3.5z" fill="#7f9cc4"/></svg><span class="t2">Created</span></div><div class="c cp" style="left:625.5px;width:78.5px;border-right:0"><b>0 %</b></div></div>
<div class="row" style="top:487.8px"><div class="c" style="left:0;width:41.5px"><div class="cb"></div></div><div class="c" style="left:41.5px;width:53.5px"></div><div class="c nm" style="left:95px;width:374.5px"><span style="transform:scaleX(0.8891)">2.3 A structured approach used to break the project work effort down into manageable components is</span></div><div class="c" style="left:469.5px;width:78.5px"><svg class="ip" width="14" height="14" viewBox="0 0 14 14"><defs><radialGradient id="po" cx=".5" cy=".5" r=".5"><stop offset="0" stop-color="#fff8ee"/><stop offset=".3" stop-color="#ffe4c0"/><stop offset=".45" stop-color="#f2a050"/><stop offset=".75" stop-color="#dc7a26"/><stop offset="1" stop-color="#b85812"/></radialGradient></defs><circle cx="6.7" cy="7" r="6.3" fill="url(#po)"/></svg><span class="t1">Normal</span></div><div class="c" style="left:548px;width:77.5px"><svg class="id" width="11" height="13" viewBox="0 0 11 13"><defs><linearGradient id="gd" x1="0" y1="0" x2="1" y2="1"><stop offset="0" stop-color="#ffffff"/><stop offset="1" stop-color="#94bfea"/></linearGradient></defs><path d="M.6 .6h6.4l3.3 3.3v8.4H.6z" fill="url(#gd)" stroke="#8ea2c0" stroke-width=".9"/><path d="M6.8 .6v3.5h3.5z" fill="#7f9cc4"/></svg><span class="t2">Created</span></div><div class="c cp" style="left:625.5px;width:78.5px;border-right:0"><b>0 %</b></div></div>
<div class="row" style="top:504.3px"><div class="c" style="left:0;width:41.5px"><div class="cb"></div></div><div class="c" style="left:41.5px;width:53.5px"></div><div class="c nm" style="left:95px;width:374.5px"><span style="transform:scaleX(0.8842)">2.4 Milestones for deliverable monitoring and project review purpose are effectively tracked and</span></div><div class="c" style="left:469.5px;width:78.5px"><svg class="ip" width="14" height="14" viewBox="0 0 14 14"><defs><radialGradient id="po" cx=".5" cy=".5" r=".5"><stop offset="0" stop-color="#fff8ee"/><stop offset=".3" stop-color="#ffe4c0"/><stop offset=".45" stop-color="#f2a050"/><stop offset=".75" stop-color="#dc7a26"/><stop offset="1" stop-color="#b85812"/></radialGradient></defs><circle cx="6.7" cy="7" r="6.3" fill="url(#po)"/></svg><span class="t1">Normal</span></div><div class="c" style="left:548px;width:77.5px"><svg class="id" width="11" height="13" viewBox="0 0 11 13"><defs><linearGradient id="gd" x1="0" y1="0" x2="1" y2="1"><stop offset="0" stop-color="#ffffff"/><stop offset="1" stop-color="#94bfea"/></linearGradient></defs><path d="M.6 .6h6.4l3.3 3.3v8.4H.6z" fill="url(#gd)" stroke="#8ea2c0" stroke-width=".9"/><path d="M6.8 .6v3.5h3.5z" fill="#7f9cc4"/></svg><span class="t2">Created</span></div><div class="c cp" style="left:625.5px;width:78.5px;border-right:0"><b>0 %</b></div></div>
<div class="row" style="top:520.8px"><div class="c" style="left:0;width:41.5px"><div class="cb"></div></div><div class="c" style="left:41.5px;width:53.5px"></div><div class="c nm" style="left:95px;width:374.5px"><span style="transform:scaleX(0.8817)">2.5 Target dates for each milestone are followed.</span></div><div class="c" style="left:469.5px;width:78.5px"><svg class="ip" width="14" height="14" viewBox="0 0 14 14"><defs><radialGradient id="po" cx=".5" cy=".5" r=".5"><stop offset="0" stop-color="#fff8ee"/><stop offset=".3" stop-color="#ffe4c0"/><stop offset=".45" stop-color="#f2a050"/><stop offset=".75" stop-color="#dc7a26"/><stop offset="1" stop-color="#b85812"/></radialGradient></defs><circle cx="6.7" cy="7" r="6.3" fill="url(#po)"/></svg><span class="t1">Normal</span></div><div class="c" style="left:548px;width:77.5px"><svg class="id" width="11" height="13" viewBox="0 0 11 13"><defs><linearGradient id="gd" x1="0" y1="0" x2="1" y2="1"><stop offset="0" stop-color="#ffffff"/><stop offset="1" stop-color="#94bfea"/></linearGradient></defs><path d="M.6 .6h6.4l3.3 3.3v8.4H.6z" fill="url(#gd)" stroke="#8ea2c0" stroke-width=".9"/><path d="M6.8 .6v3.5h3.5z" fill="#7f9cc4"/></svg><span class="t2">Created</span></div><div class="c cp" style="left:625.5px;width:78.5px;border-right:0"><b>0 %</b></div></div>
<div class="row" style="top:537.3px"><div class="c" style="left:0;width:41.5px"><div class="cb"></div></div><div class="c" style="left:41.5px;width:53.5px"></div><div class="c nm" style="left:95px;width:374.5px"><span style="transform:scaleX(0.8928)">2.6 The project proceeds in accordance with the original project schedule. If any deviations occur,</span></div><div class="c" style="left:469.5px;width:78.5px"><svg class="ip" width="14" height="14" viewBox="0 0 14 14"><defs><radialGradient id="po" cx=".5" cy=".5" r=".5"><stop offset="0" stop-color="#fff8ee"/><stop offset=".3" stop-color="#ffe4c0"/><stop offset=".45" stop-color="#f2a050"/><stop offset=".75" stop-color="#dc7a26"/><stop offset="1" stop-color="#b85812"/></radialGradient></defs><circle cx="6.7" cy="7" r="6.3" fill="url(#po)"/></svg><span class="t1">Normal</span></div><div class="c" style="left:548px;width:77.5px"><svg class="id" width="11" height="13" viewBox="0 0 11 13"><defs><linearGradient id="gd" x1="0" y1="0" x2="1" y2="1"><stop offset="0" stop-color="#ffffff"/><stop offset="1" stop-color="#94bfea"/></linearGradient></defs><path d="M.6 .6h6.4l3.3 3.3v8.4H.6z" fill="url(#gd)" stroke="#8ea2c0" stroke-width=".9"/><path d="M6.8 .6v3.5h3.5z" fill="#7f9cc4"/></svg><span class="t2">Created</span></div><div class="c cp" style="left:625.5px;width:78.5px;border-right:0"><b>0 %</b></div></div>
<div class="row" style="top:553.8px"><div class="c" style="left:0;width:41.5px"><div class="cb"></div></div><div class="c" style="left:41.5px;width:53.5px"></div><div class="c nm" style="left:95px;width:374.5px"><span style="transform:scaleX(0.8909)">2.7 A set of project review techniques is defined to compare both scheduled and unscheduled activities</span></div><div class="c" style="left:469.5px;width:78.5px"><svg class="ip" width="14" height="14" viewBox="0 0 14 14"><defs><radialGradient id="po" cx=".5" cy=".5" r=".5"><stop offset="0" stop-color="#fff8ee"/><stop offset=".3" stop-color="#ffe4c0"/><stop offset=".45" stop-color="#f2a050"/><stop offset=".75" stop-color="#dc7a26"/><stop offset="1" stop-color="#b85812"/></radialGradient></defs><circle cx="6.7" cy="7" r="6.3" fill="url(#po)"/></svg><span class="t1">Normal</span></div><div class="c" style="left:548px;width:77.5px"><svg class="id" width="11" height="13" viewBox="0 0 11 13"><defs><linearGradient id="gd" x1="0" y1="0" x2="1" y2="1"><stop offset="0" stop-color="#ffffff"/><stop offset="1" stop-color="#94bfea"/></linearGradient></defs><path d="M.6 .6h6.4l3.3 3.3v8.4H.6z" fill="url(#gd)" stroke="#8ea2c0" stroke-width=".9"/><path d="M6.8 .6v3.5h3.5z" fill="#7f9cc4"/></svg><span class="t2">Created</span></div><div class="c cp" style="left:625.5px;width:78.5px;border-right:0"><b>0 %</b></div></div>
<div class="row" style="top:570.3px"><div class="c" style="left:0;width:41.5px"><div class="cb"></div></div><div class="c" style="left:41.5px;width:53.5px"></div><div class="c nm" style="left:95px;width:374.5px"><span style="transform:scaleX(0.8829)">2.8 Project risks are managed according to a risk management plan. A contingency plan is used if</span></div><div class="c" style="left:469.5px;width:78.5px"><svg class="ip" width="14" height="14" viewBox="0 0 14 14"><defs><radialGradient id="po" cx=".5" cy=".5" r=".5"><stop offset="0" stop-color="#fff8ee"/><stop offset=".3" stop-color="#ffe4c0"/><stop offset=".45" stop-color="#f2a050"/><stop offset=".75" stop-color="#dc7a26"/><stop offset="1" stop-color="#b85812"/></radialGradient></defs><circle cx="6.7" cy="7" r="6.3" fill="url(#po)"/></svg><span class="t1">Normal</span></div><div class="c" style="left:548px;width:77.5px"><svg class="id" width="11" height="13" viewBox="0 0 11 13"><defs><linearGradient id="gd" x1="0" y1="0" x2="1" y2="1"><stop offset="0" stop-color="#ffffff"/><stop offset="1" stop-color="#94bfea"/></linearGradient></defs><path d="M.6 .6h6.4l3.3 3.3v8.4H.6z" fill="url(#gd)" stroke="#8ea2c0" stroke-width=".9"/><path d="M6.8 .6v3.5h3.5z" fill="#7f9cc4"/></svg><span class="t2">Created</span></div><div class="c cp" style="left:625.5px;width:78.5px;border-right:0"><b>0 %</b></div></div>
<div class="row" style="top:586.8px"><div class="c" style="left:0;width:41.5px"><div class="cb"></div></div><div class="c" style="left:41.5px;width:53.5px"></div><div class="c nm" style="left:95px;width:374.5px"><span style="transform:scaleX(0.8832)">2.9 A mechanism of feedback is used for better work tracking and estimating.</span></div><div class="c" style="left:469.5px;width:78.5px"><svg class="ip" width="14" height="14" viewBox="0 0 14 14"><defs><radialGradient id="po" cx=".5" cy=".5" r=".5"><stop offset="0" stop-color="#fff8ee"/><stop offset=".3" stop-color="#ffe4c0"/><stop offset=".45" stop-color="#f2a050"/><stop offset=".75" stop-color="#dc7a26"/><stop offset="1" stop-color="#b85812"/></radialGradient></defs><circle cx="6.7" cy="7" r="6.3" fill="url(#po)"/></svg><span class="t1">Normal</span></div><div class="c" style="left:548px;width:77.5px"><svg class="id" width="11" height="13" viewBox="0 0 11 13"><defs><linearGradient id="gd" x1="0" y1="0" x2="1" y2="1"><stop offset="0" stop-color="#ffffff"/><stop offset="1" stop-color="#94bfea"/></linearGradient></defs><path d="M.6 .6h6.4l3.3 3.3v8.4H.6z" fill="url(#gd)" stroke="#8ea2c0" stroke-width=".9"/><path d="M6.8 .6v3.5h3.5z" fill="#7f9cc4"/></svg><span class="t2">Created</span></div><div class="c cp" style="left:625.5px;width:78.5px;border-right:0"><b>0 %</b></div></div>
<div class="note" style="top:603.3px;height:17px"></div>
<div class="cat" style="top:620.3px;height:14px"><div class="xb"></div><span class="ct">Category: 3. Project Status Reporting.&nbsp;&nbsp;&nbsp;&nbsp;&nbsp;[ Project Review Checklist ]</span></div>
<div class="row" style="top:634.3px"><div class="c" style="left:0;width:41.5px"><div class="cb"></div></div><div class="c" style="left:41.5px;width:53.5px"></div><div class="c nm" style="left:95px;width:374.5px"><span style="transform:scaleX(0.8735)">3.1 Status of your project is reviewed by senior management at appropriate intervals.</span></div><div class="c" style="left:469.5px;width:78.5px"><svg class="ip" width="14" height="14" viewBox="0 0 14 14"><defs><radialGradient id="po" cx=".5" cy=".5" r=".5"><stop offset="0" stop-color="#fff8ee"/><stop offset=".3" stop-color="#ffe4c0"/><stop offset=".45" stop-color="#f2a050"/><stop offset=".75" stop-color="#dc7a26"/><stop offset="1" stop-color="#b85812"/></radialGradient></defs><circle cx="6.7" cy="7" r="6.3" fill="url(#po)"/></svg><span class="t1">Normal</span></div><div class="c" style="left:548px;width:77.5px"><svg class="id" width="11" height="13" viewBox="0 0 11 13"><defs><linearGradient id="gd" x1="0" y1="0" x2="1" y2="1"><stop offset="0" stop-color="#ffffff"/><stop offset="1" stop-color="#94bfea"/></linearGradient></defs><path d="M.6 .6h6.4l3.3 3.3v8.4H.6z" fill="url(#gd)" stroke="#8ea2c0" stroke-width=".9"/><path d="M6.8 .6v3.5h3.5z" fill="#7f9cc4"/></svg><span class="t2">Created</span></div><div class="c cp" style="left:625.5px;width:78.5px;border-right:0"><b>0 %</b></div></div>
<div class="row" style="top:650.8px"><div class="c" style="left:0;width:41.5px"><div class="cb"></div></div><div class="c" style="left:41.5px;width:53.5px"></div><div class="c nm" style="left:95px;width:374.5px"><span style="transform:scaleX(0.88)">3.2 Issues and project status of project are reported to senior management of the project.</span></div><div class="c" style="left:469.5px;width:78.5px"><svg class="ip" width="14" height="14" viewBox="0 0 14 14"><defs><radialGradient id="po" cx=".5" cy=".5" r=".5"><stop offset="0" stop-color="#fff8ee"/><stop offset=".3" stop-color="#ffe4c0"/><stop offset=".45" stop-color="#f2a050"/><stop offset=".75" stop-color="#dc7a26"/><stop offset="1" stop-color="#b85812"/></radialGradient></defs><circle cx="6.7" cy="7" r="6.3" fill="url(#po)"/></svg><span class="t1">Normal</span></div><div class="c" style="left:548px;width:77.5px"><svg class="id" width="11" height="13" viewBox="0 0 11 13"><defs><linearGradient id="gd" x1="0" y1="0" x2="1" y2="1"><stop offset="0" stop-color="#ffffff"/><stop offset="1" stop-color="#94bfea"/></linearGradient></defs><path d="M.6 .6h6.4l3.3 3.3v8.4H.6z" fill="url(#gd)" stroke="#8ea2c0" stroke-width=".9"/><path d="M6.8 .6v3.5h3.5z" fill="#7f9cc4"/></svg><span class="t2">Created</span></div><div class="c cp" style="left:625.5px;width:78.5px;border-right:0"><b>0 %</b></div></div>
 </div></div>
 <div id="foot" class="a"></div>
 <div id="count" class="a"><span>Count:&nbsp; 33</span></div>
 <div id="gl" class="a"></div>
 <div id="sb" class="a"></div>
 <div id="thumb" class="a"></div>
 <div class="a" style="left:720px;top:337px;width:5px;height:6px;border-top:1px solid #666;border-bottom:1px solid #666"></div><div class="a" style="left:720px;top:339.5px;width:5px;height:1px;background:#555"></div>
 <div class="a" style="left:721px;top:62.5px;border-left:2.6px solid transparent;border-right:2.6px solid transparent;border-bottom:2.8px solid #222"></div>
 <div class="a" style="left:720.5px;top:723px;border-left:2.6px solid transparent;border-right:2.6px solid transparent;border-top:2.8px solid #222"></div>
</div>
<div id="split" class="a"></div>
<div id="right" class="a">

<div class="a" style="left:0;top:0;width:227px;height:350.5px;background:#fff;border:1px solid #a5a5a5;border-top-color:#cfcfcf;border-right-color:#c8c8c8;border-left:1px solid #8a8a8a"></div>
<div class="a" style="left:0;top:0.5px;width:227px;height:15.5px;background:#fff"><span style="position:absolute;left:3px;top:3.6px;font-size:8.8px;color:#2a2a2a;white-space:nowrap;transform:scaleX(.93);transform-origin:0 0">Categories Bar</span></div>
<svg style="left:189px;top:3.5px" width="38" height="11" viewBox="0 0 38 11">
<rect x="1.3" y=".8" width="9.6" height="9.4" rx="1.3" fill="#97a3b6" stroke="#6f7888" stroke-width="1"/><rect x="3" y="2.8" width="6.3" height="4.8" fill="#fff"/><rect x="4.3" y="4.3" width="3.6" height="1.9" fill="#4a5060"/><rect x="2.6" y="8.3" width="7" height=".9" fill="#e8ecf4"/>
<path d="M15.8 1.3 H22 M16.8 1.5 L17.6 5.2 H20.4 L21.2 1.5 M15.2 5.8 H22.8 M19 6 V10" stroke="#777" stroke-width="1.1" fill="none"/>
<rect x="26" y=".8" width="10.5" height="9.4" rx="1.3" fill="#c87366" stroke="#8a3a32" stroke-width="1"/><path d="M28.8 3.3 L33.7 7.7 M33.7 3.3 L28.8 7.7" stroke="#fff" stroke-width="1.4"/>
</svg>
<div class="a" style="left:1px;top:16px;width:225.5px;height:23px;background:linear-gradient(#fdfdfe,#e8ecf6 45%,#d3daec);border-bottom:1px solid #9ca4b4"></div>
<svg style="left:0;top:16px" width="100" height="23" viewBox="0 0 100 23">
<g fill="#8a94a8"><rect x="3.5" y="3.0" width="1.2" height="1.2"/><rect x="3.5" y="5.5" width="1.2" height="1.2"/><rect x="3.5" y="8.0" width="1.2" height="1.2"/><rect x="3.5" y="10.5" width="1.2" height="1.2"/><rect x="3.5" y="13.0" width="1.2" height="1.2"/><rect x="3.5" y="15.5" width="1.2" height="1.2"/><rect x="3.5" y="18.0" width="1.2" height="1.2"/></g>
<g transform="translate(10.5,8)"><rect x=".5" y="1" width="10" height="10" fill="#fbfbfc" stroke="#dde" stroke-width=".5"/><rect x=".5" y="1" width="10" height="2" fill="#5a94d8"/><rect x=".5" y="9.5" width="10" height="1.5" fill="#8e96a4"/><path d="M6 2 H10 M8.3 .3 L10.2 2 L8.3 3.7" stroke="#2fa13a" stroke-width="1.5" fill="none"/></g>
<g transform="translate(28,8)"><rect x="1" y="1" width="3" height="2.5" fill="#4d80c8"/><rect x="3.5" y="4" width="5" height="2.3" fill="#4d80c8"/><rect x="3.5" y="7" width="5" height="2.3" fill="#4d80c8"/><rect x="3.5" y="10" width="5" height="2.3" fill="#4d80c8"/><path d="M2.3 3 V11" stroke="#4d80c8" stroke-width="1.3"/><path d="M9.5 0 V5 M7 2.5 H12" stroke="#2fa13a" stroke-width="1.6"/></g>
<g transform="translate(47,8)"><rect x=".5" y="1" width="10" height="10" fill="#fbfbfc"/><rect x=".5" y="1" width="10" height="2" fill="#5a94d8"/><rect x=".5" y="9.5" width="10" height="1.5" fill="#8e96a4"/><path d="M2.5 8.5 L10 1" stroke="#d9b040" stroke-width="1.8"/><path d="M9.2 1.6 L11 -.2" stroke="#d05040" stroke-width="1.8"/></g>
<g transform="translate(65,8)"><rect x=".5" y="1" width="10" height="10" fill="#fbfbfc"/><rect x=".5" y="1" width="10" height="2" fill="#5a94d8"/><rect x=".5" y="9.5" width="6" height="1.5" fill="#8e96a4"/><path d="M6 5.3 L10.5 10.3 M10.5 5.3 L6 10.3" stroke="#e0503a" stroke-width="1.3"/></g>
<path d="M81.5 16.5 H85.5 L83.5 18.5Z" fill="#111"/>
</svg>
<div class="a" style="left:1px;top:40px;width:225.5px;height:11px;background:linear-gradient(#ffffff,#f4f4f4)"></div>
<div class="a" style="left:177.5px;top:41px;width:1px;height:10px;background:#e2e2e2"></div>
<div class="a" style="left:207.5px;top:41px;width:1px;height:10px;background:#e2e2e2"></div>
<span class="a" style="left:181px;top:41.8px;font-size:8.8px;color:#444;white-space:nowrap;transform:scaleX(.92);transform-origin:0 0">UnD...</span>
<span class="a" style="left:210.5px;top:41.8px;font-size:8.8px;color:#444;white-space:nowrap;transform:scaleX(.92);transform-origin:0 0">T...</span>
<!-- tree -->
<div class="a" style="left:179px;top:53px;width:47px;height:13.5px;background:#e9e9e9"></div>
<div class="a" style="left:30.5px;top:53px;width:196px;height:13.5px;border:1px solid #3a3a3a"></div>
<div class="a" style="left:5px;top:57px;width:7.5px;height:7.5px;border:1px solid #9a9a9a;background:#fff"></div>
<div class="a" style="left:6.6px;top:60.3px;width:4.2px;height:1px;background:#444"></div>
<div class="a" style="left:12.5px;top:60.5px;width:3px;height:1px;background:#bbb"></div>
<svg style="left:15.5px;top:55.5px" width="12" height="10" viewBox="0 0 12 10"><path d="M.5 1.5 H4.5 L5.5 2.5 H10 V9.5 H.5Z" fill="#e8c84a" stroke="#c0a030" stroke-width=".6"/><path d="M2 4.3 H11.5 L10 9.5 H.5Z" fill="#f8e070" stroke="#c8a838" stroke-width=".6"/></svg>
<svg style="left:32px;top:54.5px" width="13" height="11" viewBox="0 0 13 11"><path d="M1 2 Q4 0 6.5 2.5 Q9 0 12 2 V9.5 Q9 8 6.5 10 Q4 8 1 9.5Z" fill="#fff8ec" stroke="#c89a6a" stroke-width=".9"/><path d="M6.5 2.5 V10" stroke="#8aa8d8" stroke-width="1"/><path d="M3 4 H5.5 M7.5 4 H10 M3 6 H5.5" stroke="#e0a070" stroke-width=".6"/></svg>
<div class="a" style="left:22px;top:66.5px;width:1px;height:34px;border-left:1px solid #c4c4c4"></div>
<div class="a" style="left:22px;top:73.3px;width:7px;height:1px;border-top:1px solid #c4c4c4"></div>
<div class="a" style="left:22px;top:86.8px;width:7px;height:1px;border-top:1px solid #c4c4c4"></div>
<div class="a" style="left:22px;top:100.3px;width:7px;height:1px;border-top:1px solid #c4c4c4"></div>
<svg style="left:31px;top:67.5px" width="13" height="11" viewBox="0 0 13 11"><circle cx="3.5" cy="3" r="2.3" fill="#e8a040"/><circle cx="9" cy="3" r="2.3" fill="#b86a20"/><path d="M0 10 Q.5 5.5 3.5 5.5 Q6.5 5.5 7 10Z" fill="#3a6ac8"/><path d="M5.5 10 Q6 5.5 9 5.5 Q12 5.5 12.5 10Z" fill="#3aa040"/></svg>
<svg style="left:32px;top:80.5px" width="11" height="12" viewBox="0 0 11 12"><rect x=".8" y="1.5" width="9.2" height="10" rx="1" fill="#f0f0f0" stroke="#8a4a4a" stroke-width="1"/><rect x=".8" y="1.5" width="3" height="10" fill="#b85050"/><rect x="3" y=".3" width="5" height="2" fill="#888"/><text x="5.3" y="10" font-size="6" font-family="Liberation Sans" fill="#333">5</text></svg>
<svg style="left:31px;top:93.5px" width="13" height="12" viewBox="0 0 13 12"><path d="M.8 11.6 L5.8 6.2 L5 4.6 L11.5 .6 L9.6 5.6 L8.6 4.8 L7 7.4Z" fill="#2e62c8" stroke="#1a3a90" stroke-width=".5"/><path d="M2.5 9.5 L6.5 5.5 M6.5 4.6 L10.5 1.6" stroke="#a8ccf4" stroke-width=".7"/></svg>
<span class="a" style="left:47px;top:53.9px;font-size:9.4px;font-weight:bold;color:#000;white-space:nowrap;transform:scaleX(.955);transform-origin:0 0;-webkit-text-stroke:.15px #000">Project Review Checklist</span>
<span class="a" style="left:151px;top:53.9px;width:56px;text-align:right;font-size:9.6px;font-weight:bold;color:#000;-webkit-text-stroke:.15px #000">33</span>
<span class="a" style="left:180px;top:53.9px;width:45.5px;text-align:right;font-size:9.6px;font-weight:bold;color:#000;-webkit-text-stroke:.15px #000">33</span><span class="a" style="left:47px;top:67.4px;font-size:9.4px;font-weight:bold;color:#000;white-space:nowrap;transform:scaleX(.955);transform-origin:0 0;-webkit-text-stroke:.15px #000">1.Project Planning Review.</span>
<span class="a" style="left:151px;top:67.4px;width:56px;text-align:right;font-size:9.6px;font-weight:bold;color:#000;-webkit-text-stroke:.15px #000">17</span>
<span class="a" style="left:180px;top:67.4px;width:45.5px;text-align:right;font-size:9.6px;font-weight:bold;color:#000;-webkit-text-stroke:.15px #000">17</span><span class="a" style="left:47px;top:80.9px;font-size:9.4px;font-weight:bold;color:#000;white-space:nowrap;transform:scaleX(.955);transform-origin:0 0;-webkit-text-stroke:.15px #000">2.Project Management Review</span>
<span class="a" style="left:151px;top:80.9px;width:56px;text-align:right;font-size:9.6px;font-weight:bold;color:#000;-webkit-text-stroke:.15px #000">9</span>
<span class="a" style="left:180px;top:80.9px;width:45.5px;text-align:right;font-size:9.6px;font-weight:bold;color:#000;-webkit-text-stroke:.15px #000">9</span><span class="a" style="left:47px;top:94.4px;font-size:9.4px;font-weight:bold;color:#000;white-space:nowrap;transform:scaleX(.955);transform-origin:0 0;-webkit-text-stroke:.15px #000">3. Project Status Reporting.</span>
<span class="a" style="left:151px;top:94.4px;width:56px;text-align:right;font-size:9.6px;font-weight:bold;color:#000;-webkit-text-stroke:.15px #000">7</span>
<span class="a" style="left:180px;top:94.4px;width:45.5px;text-align:right;font-size:9.6px;font-weight:bold;color:#000;-webkit-text-stroke:.15px #000">7</span>
<div class="a" style="left:0;top:353px;width:227px;height:343px;background:#f0f0f0;border:1px solid #a5a5a5;border-top-color:#bdbdbd;border-right-color:#c8c8c8;border-left:1px solid #8a8a8a;border-bottom:0"></div>
<div class="a" style="left:0;top:353.5px;width:227px;height:15.5px;background:#fff"><span style="position:absolute;left:3px;top:3.6px;font-size:8.8px;color:#2a2a2a;white-space:nowrap;transform:scaleX(.93);transform-origin:0 0">Filters Bar</span></div>
<svg style="left:189px;top:356.5px" width="38" height="11" viewBox="0 0 38 11">
<rect x="1.3" y=".8" width="9.6" height="9.4" rx="1.3" fill="#97a3b6" stroke="#6f7888" stroke-width="1"/><rect x="3" y="2.8" width="6.3" height="4.8" fill="#fff"/><rect x="4.3" y="4.3" width="3.6" height="1.9" fill="#4a5060"/><rect x="2.6" y="8.3" width="7" height=".9" fill="#e8ecf4"/>
<path d="M15.8 1.3 H22 M16.8 1.5 L17.6 5.2 H20.4 L21.2 1.5 M15.2 5.8 H22.8 M19 6 V10" stroke="#777" stroke-width="1.1" fill="none"/>
<rect x="26" y=".8" width="10.5" height="9.4" rx="1.3" fill="#c87366" stroke="#8a3a32" stroke-width="1"/><path d="M28.8 3.3 L33.7 7.7 M33.7 3.3 L28.8 7.7" stroke="#fff" stroke-width="1.4"/>
</svg>
<div class="a" style="left:1px;top:368.5px;width:225.5px;height:24px;background:linear-gradient(#fdfdfe,#e8ecf6 45%,#d3daec);border-bottom:1px solid #9ca4b4"></div>
<svg style="left:0;top:368.5px" width="150" height="24" viewBox="0 0 150 24">
<g fill="#8a94a8"><rect x="3.5" y="3.5" width="1.2" height="1.2"/><rect x="3.5" y="6.0" width="1.2" height="1.2"/><rect x="3.5" y="8.5" width="1.2" height="1.2"/><rect x="3.5" y="11.0" width="1.2" height="1.2"/><rect x="3.5" y="13.5" width="1.2" height="1.2"/><rect x="3.5" y="16.0" width="1.2" height="1.2"/><rect x="3.5" y="18.5" width="1.2" height="1.2"/></g>
<path d="M94 11.5 H98 L96 13.5Z" fill="#111"/>
<path d="M124.5 8.5 L133.5 17.5 M133.5 8.5 L124.5 17.5" stroke="#b9bcc2" stroke-width="2.4"/>
<path d="M140 16.5 H144 L142 18.5Z" fill="#111"/>
<path d="M106.5 13.5 L112 8 Q113.5 6.8 115 8 L116.5 9.5 Q117.5 11 116.3 12.3 L111.5 17 H108.5 L106.5 15 Q106 14.2 106.5 13.5Z" fill="#ececec" stroke="#8c8c8c" stroke-width=".9"/><path d="M109 11 L113.5 15.3" stroke="#b8b8b8" stroke-width=".8"/><path d="M110 17.3 H117" stroke="#8c8c8c" stroke-width=".9"/>
<path d="M79.5 13 H84 V19 H79.5Z" fill="#f4f4fa" stroke="#8a8ad0" stroke-width="1"/><path d="M82 15 Q85 9 90 6.5 L88.5 5 L92 4.2 L91.5 8 L90.3 6.8 Q86.5 10 84.5 15.5Z" fill="#36ae3a"/><path d="M86 5 Q89 3 91.5 5.5 V12 Q89 14 86 12Z" fill="#e4eef6" stroke="#9ab" stroke-width=".6" opacity=".8"/><path d="M82 15 Q85 9 90 6.5 L88.5 5 L92 4.2 L91.5 8 L90.3 6.8 Q86.5 10 84.5 15.5Z" fill="#36ae3a"/>
</svg>
<div class="a" style="left:7px;top:374px;width:63px;height:15px;background:#b6d0ee;border:1px solid #a8c0dc"><span style="position:absolute;left:2px;top:2.3px;font-size:9px;color:#6a84a8;white-space:nowrap;transform:scaleX(.96);transform-origin:0 0">Custom</span></div>
<div class="a" style="left:70px;top:374px;width:6px;height:15px;background:#fafafa;border:1px solid #999"></div>
<div class="a" style="left:1px;top:393px;width:225.5px;height:142px;background:#ececec"></div>
<div class="a" style="left:75px;top:393px;width:1px;height:142px;background:#a8a8a8"></div>
<div class="a" style="left:1px;top:393.40px;width:225.5px;height:15.8px;border-bottom:1px solid #d4d4d4"></div><span class="a" style="left:12.5px;top:396.60px;font-size:8.8px;color:#111;white-space:nowrap;transform:scaleX(.92);transform-origin:0 0;width:65px;overflow:hidden;-webkit-text-stroke:.15px #111">Completion</span><div class="a" style="left:213px;top:394.70px;width:12.5px;height:13.5px;border:1px solid #a8a8a8;background:linear-gradient(#fbfbfb,#e4e4e4)"></div><div class="a" style="left:216.3px;top:400.20px;border-left:3px solid transparent;border-right:3px solid transparent;border-top:3.3px solid #111"></div><div class="a" style="left:1px;top:409.26px;width:225.5px;height:15.8px;border-bottom:1px solid #d4d4d4"></div><span class="a" style="left:12.5px;top:412.46px;font-size:8.8px;color:#111;white-space:nowrap;transform:scaleX(.92);transform-origin:0 0;width:65px;overflow:hidden;-webkit-text-stroke:.15px #111">Due Date</span><div class="a" style="left:213px;top:410.56px;width:12.5px;height:13.5px;border:1px solid #a8a8a8;background:linear-gradient(#fbfbfb,#e4e4e4)"></div><div class="a" style="left:216.3px;top:416.06px;border-left:3px solid transparent;border-right:3px solid transparent;border-top:3.3px solid #111"></div><div class="a" style="left:1px;top:425.12px;width:225.5px;height:15.8px;border-bottom:1px solid #d4d4d4"></div><span class="a" style="left:12.5px;top:428.32px;font-size:8.8px;color:#111;white-space:nowrap;transform:scaleX(.92);transform-origin:0 0;width:65px;overflow:hidden;-webkit-text-stroke:.15px #111">Status</span><div class="a" style="left:213px;top:426.42px;width:12.5px;height:13.5px;border:1px solid #a8a8a8;background:linear-gradient(#fbfbfb,#e4e4e4)"></div><div class="a" style="left:216.3px;top:431.92px;border-left:3px solid transparent;border-right:3px solid transparent;border-top:3.3px solid #111"></div><div class="a" style="left:1px;top:440.98px;width:225.5px;height:15.8px;border-bottom:1px solid #d4d4d4"></div><span class="a" style="left:12.5px;top:444.18px;font-size:8.8px;color:#111;white-space:nowrap;transform:scaleX(.92);transform-origin:0 0;width:65px;overflow:hidden;-webkit-text-stroke:.15px #111">Priority</span><div class="a" style="left:213px;top:442.28px;width:12.5px;height:13.5px;border:1px solid #a8a8a8;background:linear-gradient(#fbfbfb,#e4e4e4)"></div><div class="a" style="left:216.3px;top:447.78px;border-left:3px solid transparent;border-right:3px solid transparent;border-top:3.3px solid #111"></div><div class="a" style="left:1px;top:456.84px;width:225.5px;height:15.8px;border-bottom:1px solid #d4d4d4"></div><span class="a" style="left:12.5px;top:460.04px;font-size:8.8px;color:#111;white-space:nowrap;transform:scaleX(.92);transform-origin:0 0;width:65px;overflow:hidden;-webkit-text-stroke:.15px #111">Task Name</span><div class="a" style="left:1px;top:472.70px;width:225.5px;height:15.8px;border-bottom:1px solid #d4d4d4"></div><span class="a" style="left:12.5px;top:475.90px;font-size:8.8px;color:#111;white-space:nowrap;transform:scaleX(.92);transform-origin:0 0;width:65px;overflow:hidden;-webkit-text-stroke:.15px #111">Date Created</span><div class="a" style="left:213px;top:474.00px;width:12.5px;height:13.5px;border:1px solid #a8a8a8;background:linear-gradient(#fbfbfb,#e4e4e4)"></div><div class="a" style="left:216.3px;top:479.50px;border-left:3px solid transparent;border-right:3px solid transparent;border-top:3.3px solid #111"></div><div class="a" style="left:1px;top:488.56px;width:225.5px;height:15.8px;border-bottom:1px solid #d4d4d4"></div><span class="a" style="left:12.5px;top:491.76px;font-size:8.8px;color:#111;white-space:nowrap;transform:scaleX(.92);transform-origin:0 0;width:65px;overflow:hidden;-webkit-text-stroke:.15px #111">Date Last Modifie</span><div class="a" style="left:213px;top:489.86px;width:12.5px;height:13.5px;border:1px solid #a8a8a8;background:linear-gradient(#fbfbfb,#e4e4e4)"></div><div class="a" style="left:216.3px;top:495.36px;border-left:3px solid transparent;border-right:3px solid transparent;border-top:3.3px solid #111"></div><div class="a" style="left:1px;top:504.42px;width:225.5px;height:15.8px;border-bottom:1px solid #d4d4d4"></div><span class="a" style="left:12.5px;top:507.62px;font-size:8.8px;color:#111;white-space:nowrap;transform:scaleX(.92);transform-origin:0 0;width:65px;overflow:hidden;-webkit-text-stroke:.15px #111">Date Opened</span><div class="a" style="left:213px;top:505.72px;width:12.5px;height:13.5px;border:1px solid #a8a8a8;background:linear-gradient(#fbfbfb,#e4e4e4)"></div><div class="a" style="left:216.3px;top:511.22px;border-left:3px solid transparent;border-right:3px solid transparent;border-top:3.3px solid #111"></div><div class="a" style="left:1px;top:520.28px;width:225.5px;height:15.8px;border-bottom:1px solid #d4d4d4"></div><span class="a" style="left:12.5px;top:523.48px;font-size:8.8px;color:#111;white-space:nowrap;transform:scaleX(.92);transform-origin:0 0;width:65px;overflow:hidden;-webkit-text-stroke:.15px #111">Date Completed</span><div class="a" style="left:213px;top:521.58px;width:12.5px;height:13.5px;border:1px solid #a8a8a8;background:linear-gradient(#fbfbfb,#e4e4e4)"></div><div class="a" style="left:216.3px;top:527.08px;border-left:3px solid transparent;border-right:3px solid transparent;border-top:3.3px solid #111"></div>
<div class="a" style="left:1px;top:671px;width:225.5px;height:6px;background:#fff;border-top:1px solid #a5a5a5"></div>
<div class="a" style="left:1px;top:676px;width:225.5px;height:20px;background:#fff"></div>
<div class="a" style="left:3.5px;top:676.5px;width:41.5px;height:17px;background:#fff;border:1px solid #b8b8b8;border-top:0"><span style="position:absolute;left:1.5px;top:3.5px;font-size:8.6px;color:#222;white-space:nowrap;transform:scaleX(.92);transform-origin:0 0;-webkit-text-stroke:.15px #222">Filters Bar</span></div>
<div class="a" style="left:45px;top:676.5px;width:58px;height:16px;background:linear-gradient(#e8e8e8,#dcdcdc);border:1px solid #b8b8b8;border-top:0;border-left:0"><span style="position:absolute;left:1.5px;top:3px;font-size:8.6px;color:#222;white-space:nowrap;transform:scaleX(.92);transform-origin:0 0;-webkit-text-stroke:.15px #222">Navigation Bar</span></div>

</div>
<div id="bottom" class="a">
 <div class="ntab" style="left:4px;width:52px"><span>Note</span></div>
 <div class="ntab" style="left:56px;width:19px"><span>S...</span></div>
</div>
<div id="status" class="a"></div>
<div class="a" style="left:0;top:765px;width:960px;height:1px;background:#fff"></div>
<div class="a" style="left:0;top:766px;width:230px;height:2px;background:#c4c4c4"></div>
<div class="a" style="left:44.6px;top:766px;width:43.7px;height:2px;background:#d8d8d8;border-top:1px solid #707070;border-left:1px solid #707070;border-right:1px solid #909090;border-radius:2px 2px 0 0"></div>
<div class="a" style="left:91px;top:766px;width:45px;height:2px;background:#d8d8d8;border-top:1px solid #707070;border-left:1px solid #707070;border-right:1px solid #909090;border-radius:2px 2px 0 0"></div>
<div class="a" style="left:137.5px;top:766px;width:44px;height:2px;background:#d8d8d8;border-top:1px solid #707070;border-left:1px solid #707070;border-right:1px solid #909090;border-radius:2px 2px 0 0"></div>
<div class="a" style="left:183.5px;top:766px;width:45px;height:2px;background:#d8d8d8;border-top:1px solid #707070;border-left:1px solid #707070;border-right:1px solid #909090;border-radius:2px 2px 0 0"></div>
<div id="wm" class="a">www.todolistsoft.com</div>

</body></html>
